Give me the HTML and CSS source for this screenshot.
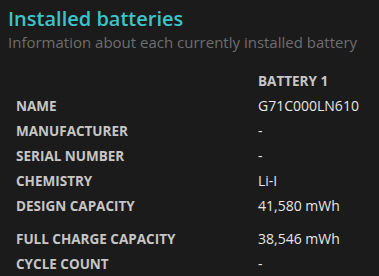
FILE: index.html
```html
<!DOCTYPE html>
<html>
<head>
    <meta charset="UTF-8">
    <title>Battery report</title>
    <link rel="stylesheet" href="styles.css">
</head>
<body>
    <h1>Installed batteries</h1>
    <p class="subtitle">Information about each currently installed battery</p>
    <table class="batteries">
        <tr class="head">
            <td class="label"></td>
            <td class="value">BATTERY 1</td>
        </tr>
        <tr>
            <td class="label">NAME</td>
            <td class="value">G71C000LN610</td>
        </tr>
        <tr>
            <td class="label">MANUFACTURER</td>
            <td class="value">-</td>
        </tr>
        <tr>
            <td class="label">SERIAL NUMBER</td>
            <td class="value">-</td>
        </tr>
        <tr>
            <td class="label">CHEMISTRY</td>
            <td class="value">Li-I</td>
        </tr>
        <tr class="spaced">
            <td class="label">DESIGN CAPACITY</td>
            <td class="value">41,580 mWh</td>
        </tr>
        <tr>
            <td class="label">FULL CHARGE CAPACITY</td>
            <td class="value">38,546 mWh</td>
        </tr>
        <tr>
            <td class="label">CYCLE COUNT</td>
            <td class="value">-</td>
        </tr>
    </table>
</body>
</html>
```
FILE: styles.css
```css
body {
    background-color: #1b1b1b;
    font-family: "Open Sans", "Noto Sans", sans-serif;
    color: #e6e6e6;
    margin: 0;
    padding: 6px 8px 0 8px;
}
h1 {
    color: #3cc4c9;
    font-size: 20px;
    font-weight: 600;
    line-height: 26px;
    margin: 0;
}
.subtitle {
    color: #6e6e6e;
    font-size: 15px;
    line-height: 20px;
    margin: 0;
}
.batteries {
    border-collapse: collapse;
    margin-top: 16px;
}
.batteries td {
    padding: 0;
    height: 25px;
    vertical-align: middle;
}
.label {
    width: 242px;
    padding-left: 8px !important;
    color: #c6c6c6;
    font-size: 13.5px;
    font-weight: 700;
}
.value {
    color: #e6e6e6;
    font-size: 14px;
}
.head .value {
    color: #c6c6c6;
    font-size: 13.5px;
    font-weight: 700;
}
.spaced td {
    padding-bottom: 8px;
}
```
